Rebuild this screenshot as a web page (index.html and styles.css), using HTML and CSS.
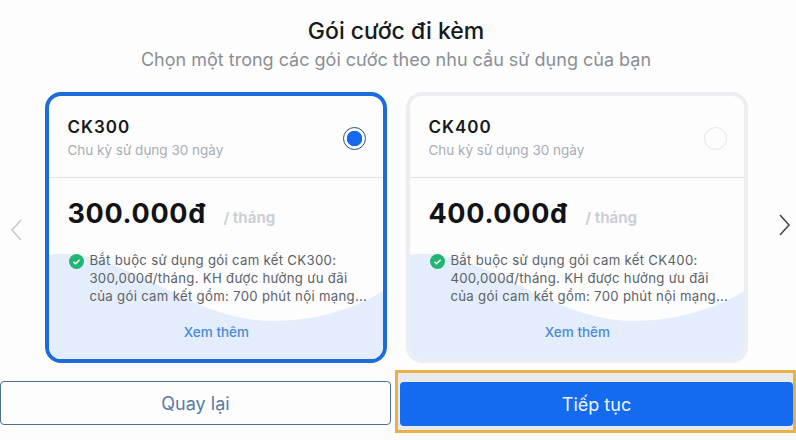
FILE: index.html
```html
<!DOCTYPE html>
<html lang="vi">
<head>
<meta charset="utf-8">
<title>Gói cước đi kèm</title>
<link rel="stylesheet" href="styles.css">
</head>
<body>
<main class="page">
  <header class="head">
    <h1 class="title">Gói cước đi kèm</h1>
    <p class="subtitle">Chọn một trong các gói cước theo nhu cầu sử dụng của bạn</p>
  </header>
  <section class="carousel">
    <button class="arrow arrow-prev" aria-label="Trước">
      <svg width="12" height="22" viewBox="0 0 12 22"><path d="M11 1 2 11l9 10" fill="none" stroke="#c3c8cf" stroke-width="1.5"/></svg>
    </button>
    <div class="cards">
      <article class="card card-active">
        <svg class="wave" viewBox="0 0 335 112" preserveAspectRatio="none"><path d="M0 8C40 0 90 30 130 48 170 68 200 74 225 74 270 74 310 60 335 44V112H0Z" fill="#e3edfb"/></svg>
        <div class="card-top">
          <div>
            <h2 class="plan">CK300</h2>
            <p class="cycle">Chu kỳ sử dụng 30 ngày</p>
          </div>
          <span class="radio radio-on"></span>
        </div>
        <div class="card-body">
          <p class="price"><strong>300.000đ</strong> <span class="per">/ tháng</span></p>
          <div class="desc">
            <svg class="check" width="15" height="15" viewBox="0 0 15 15"><circle cx="7.5" cy="7.5" r="7.5" fill="#22b573"/><path d="m4.4 7.7 2.2 2.1 4-4" fill="none" stroke="#fff" stroke-width="1.5"/></svg>
            <p>Bắt buộc sử dụng gói cam kết CK300: 300,000đ/tháng. KH được hưởng ưu đãi của gói cam kết gồm: 700 phút nội mạng...</p>
          </div>
          <a class="more">Xem thêm</a>
        </div>
      </article>
      <article class="card">
        <svg class="wave" viewBox="0 0 335 112" preserveAspectRatio="none"><path d="M0 8C40 0 90 30 130 48 170 68 200 74 225 74 270 74 310 60 335 44V112H0Z" fill="#e3edfb"/></svg>
        <div class="card-top">
          <div>
            <h2 class="plan">CK400</h2>
            <p class="cycle">Chu kỳ sử dụng 30 ngày</p>
          </div>
          <span class="radio"></span>
        </div>
        <div class="card-body">
          <p class="price"><strong>400.000đ</strong> <span class="per">/ tháng</span></p>
          <div class="desc">
            <svg class="check" width="15" height="15" viewBox="0 0 15 15"><circle cx="7.5" cy="7.5" r="7.5" fill="#22b573"/><path d="m4.4 7.7 2.2 2.1 4-4" fill="none" stroke="#fff" stroke-width="1.5"/></svg>
            <p>Bắt buộc sử dụng gói cam kết CK400: 400,000đ/tháng. KH được hưởng ưu đãi của gói cam kết gồm: 700 phút nội mạng...</p>
          </div>
          <a class="more">Xem thêm</a>
        </div>
      </article>
    </div>
    <button class="arrow arrow-next" aria-label="Sau">
      <svg width="12" height="22" viewBox="0 0 12 22"><path d="m1 1 9 10-9 10" fill="none" stroke="#3d4550" stroke-width="1.5"/></svg>
    </button>
  </section>
  <footer class="actions">
    <button class="btn btn-back">Quay lại</button>
    <div class="focus-ring"><button class="btn btn-next">Tiếp tục</button></div>
  </footer>
</main>
</body>
</html>
```
FILE: styles.css
```css
* { box-sizing: border-box; }
html, body { margin: 0; height: 100%; }
body {
  background: #fdfdfe;
  font-family: Inter, "Noto Sans", sans-serif;
  overflow: hidden;
}
.page { width: 796px; height: 440px; display: flex; flex-direction: column; }
.head { padding: 16px 4px 0 0; text-align: center; height: 92px; }
.title { margin: 0; font-size: 23px; line-height: 30px; font-weight: 500; color: #17191c; }
.subtitle { margin: 2px 0 0; font-size: 18px; line-height: 24px; font-weight: 400; color: #8a8f95; }
.carousel { display: flex; align-items: center; height: 271px; }
.arrow { width: 46px; height: 100%; padding: 0; border: 0; background: none; display: flex; align-items: center; justify-content: center; }
.arrow-prev { padding-right: 14px; padding-top: 5px; }
.arrow-next { width: 48px; padding-left: 26px; padding-bottom: 6px; }
.cards { display: flex; gap: 19px; }
.card {
  position: relative;
  width: 342px;
  height: 271px;
  border: 4px solid #eceef2;
  border-radius: 16px;
  background: #fdfdfe;
  overflow: hidden;
}
.card-active { border-color: #1c6cdb; }
.wave { position: absolute; left: 0; bottom: 0; width: 100%; height: 112px; }
.card-top {
  position: relative;
  height: 82px;
  padding: 21px 18px 0;
  display: flex;
  justify-content: space-between;
  align-items: flex-start;
  border-bottom: 1px solid #dfe2e7;
}
.plan { margin: 0; font-size: 17px; line-height: 20px; font-weight: 600; color: #16181b; letter-spacing: 1px; }
.cycle { margin: 5px 0 0; font-size: 13.5px; line-height: 17px; color: #a8adb3; }
.radio { width: 23px; height: 23px; margin-top: 10px; margin-right: -1px; border: 1px solid #e3e5e9; border-radius: 50%; background: #fdfdfe; }
.radio-on { border-color: #1d4f91; background: radial-gradient(circle, #1569f0 0 7.5px, #fdfdfe 8px); }
.card-body { position: relative; padding: 0 18px; }
.price { margin: 19px 0 0; height: 34px; line-height: 34px; color: #a8adb3; white-space: nowrap; }
.price strong { font-size: 27px; font-weight: 700; color: #111316; letter-spacing: 0.7px; }
.per { font-size: 15px; font-weight: 700; color: #ccd0d6; margin-left: 13px; }
.desc { display: flex; gap: 5px; margin-top: 20px; padding-left: 2px; }
.check { flex: none; margin-top: 3px; }
.desc p { flex: none; margin: 0; width: 285px; font-size: 13.2px; line-height: 18px; color: #5c6167; letter-spacing: 0.3px; }
.more { display: block; margin-top: 18px; text-align: center; font-size: 13.5px; line-height: 18px; font-weight: 500; color: #4a8ad4; }
.actions { display: flex; height: 77px; padding-top: 14px; align-items: flex-start; }
.btn { height: 44px; border-radius: 4px; font-family: inherit; font-size: 18px; font-weight: 400; padding: 0; }
.btn-back { width: 391px; margin-top: 4px; border: 1px solid #4f6f8f; background: #fdfdfe; color: #5a7aa6; }
.focus-ring { margin-left: 4px; width: 401px; height: 63px; margin-top: -7px; padding: 9px 0 0 2px; border: 3px solid #e8b048; background: #e9eaeb; }
.btn-next { display: block; width: 100%; border: 0; background: #146bf0; color: #eef5ff; }
```
